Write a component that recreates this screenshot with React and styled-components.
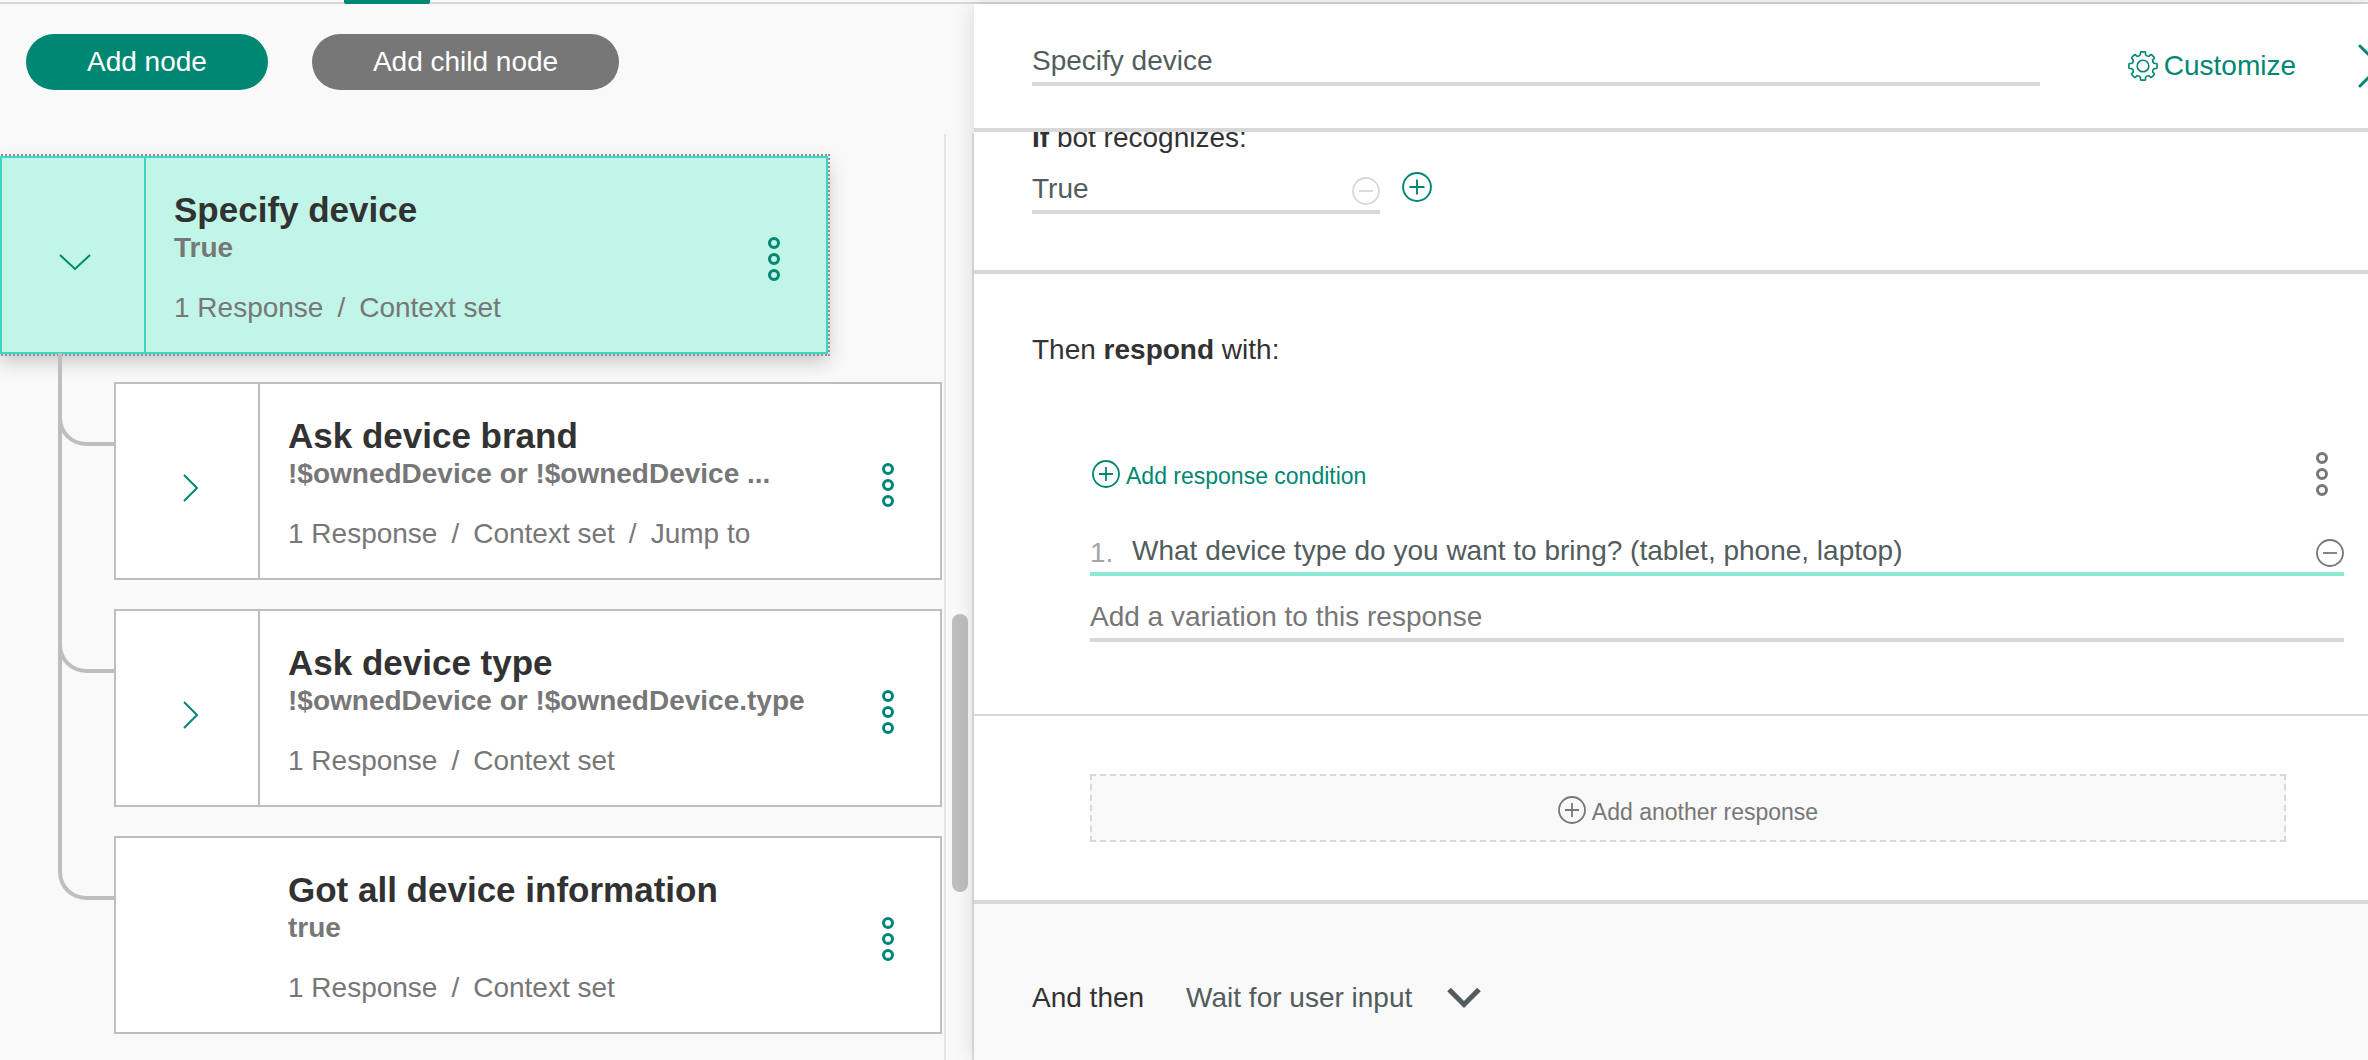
import React from "react";
import styled, { createGlobalStyle, css } from "styled-components";

const color = {
  green: "#008773",
  teal: "#41d6c3",
  mint: "#c0f5e8",
  mintLine: "#8ce9d4",
  panel: "#f9f9f9",
  line: "#d8d8d8",
  cardLine: "#bebebe",
  ink: "#323232",
  field: "#525c5c",
  grey: "#777777",
};

const GlobalStyle = createGlobalStyle`
  *, *::before, *::after { box-sizing: border-box; }
  body {
    margin: 0;
    background: ${color.panel};
    color: ${color.ink};
    font-family: "Liberation Sans", Arial, sans-serif;
    font-size: 28px;
    line-height: 32px;
  }
  button, input, select { font: inherit; color: inherit; }
`;

const Page = styled.div`
  display: flex;
  flex-direction: column;
  min-height: 100vh;
  overflow: hidden;
`;

const TabBar = styled.nav`
  display: flex;
  height: 4px;
  padding-left: 344px;
  border-bottom: 2px solid ${color.line};
`;

const ActiveTab = styled.span`
  width: 86px;
  height: 4px;
  background: ${color.green};
  border-radius: 0 0 2px 2px;
`;

const Workspace = styled.div`
  display: flex;
  flex: 1;
`;

const TreePanel = styled.section`
  display: flex;
  flex-direction: column;
  flex: none;
  width: 974px;
`;

const Toolbar = styled.div`
  display: flex;
  gap: 44px;
  padding: 30px 26px 44px;
`;

const PillButton = styled.button`
  height: 56px;
  padding: 0 61px;
  border: 0;
  border-radius: 28px;
  background: ${(p) => (p.$muted ? color.grey : color.green)};
  color: #fff;
`;

const TreeScroller = styled.div`
  display: flex;
  flex: 1;
`;

const Tree = styled.div`
  flex: 1;
  padding: 22px 2px 26px 0;
`;

const Track = styled.div`
  display: grid;
  grid-template-rows: 480fr 278fr 168fr;
  width: 30px;
  border-left: 2px solid #e6e6e6;
  border-right: 2px solid #e0e0e0;
`;

const Thumb = styled.div`
  grid-row: 2;
  width: 16px;
  margin-left: 6px;
  border-radius: 8px;
  background: ${color.cardLine};
`;

const Card = styled.article`
  display: flex;
  flex: 1;
  height: 198px;
  border: 2px solid ${color.cardLine};
  background: #fff;
  ${(p) =>
    p.$selected &&
    css`
      margin-right: 114px;
      border-color: ${color.teal};
      background: ${color.mint};
      outline: 2px dotted #8f8f8f;
      box-shadow: 0 8px 18px rgba(0, 0, 0, 0.2);
    `}
`;

const Toggle = styled.button`
  display: flex;
  align-items: center;
  justify-content: center;
  width: 144px;
  padding: 14px 0 0 ${(p) => (p.$selected ? 4 : 8)}px;
  border: 0;
  border-right: 2px solid ${(p) => (p.$selected ? color.teal : color.cardLine)};
  background: none;
`;

const NoToggle = styled.div`
  width: 144px;
`;

const CardText = styled.div`
  flex: 1;
  padding: 32px 0 0 28px;
`;

const CardTitle = styled.h3`
  margin: 0;
  font-size: 35px;
  line-height: 40px;
`;

const Condition = styled.p`
  margin: 0;
  color: ${color.grey};
  font-weight: bold;
  line-height: 36px;
`;

const Meta = styled.ul`
  display: flex;
  margin: 24px 0 0;
  padding: 0;
  list-style: none;
  color: ${color.grey};
  line-height: 36px;
  li + li::before {
    content: "/";
    margin: 0 14px;
  }
`;

const MenuButton = styled.button`
  display: flex;
  align-items: center;
  padding: ${(p) => (p.$inCard ? "8px 46px 0 16px" : "0 16px")};
  border: 0;
  background: none;
  color: ${(p) => (p.$inCard ? color.green : color.grey)};
`;

const Children = styled.ul`
  position: relative;
  margin: -1px 0 0;
  padding: 0 0 0 58px;
  list-style: none;
`;

const ChildRow = styled.li`
  display: flex;
`;

const Rail = styled.div`
  width: 56px;
  border-left: 4px solid ${(p) => (p.$last ? "transparent" : color.cardLine)};
`;

const Elbow = styled.div`
  height: 93px;
  margin-left: -4px;
  border: solid ${color.cardLine};
  border-width: 0 0 4px 4px;
  border-bottom-left-radius: 28px;
`;

const CardSlot = styled.div`
  display: flex;
  flex: 1;
  padding-top: 29px;
`;

const Detail = styled.section`
  position: relative;
  display: flex;
  flex-direction: column;
  flex: 1;
  min-width: 0;
  background: #fff;
  box-shadow: 0 0 20px rgba(0, 0, 0, 0.14);
`;

const DetailHeader = styled.header`
  display: flex;
  padding: 40px 0 40px 58px;
  border-bottom: 4px solid ${color.line};
`;

const Field = styled.div`
  display: flex;
  align-items: center;
  flex: ${(p) => (p.$short ? "none" : 1)};
  width: ${(p) => (p.$short ? "348px" : "auto")};
  min-width: 0;
  height: 42px;
  border-bottom: 4px solid ${(p) => (p.$active ? color.mintLine : color.line)};
`;

const TextInput = styled.input`
  flex: 1;
  min-width: 0;
  height: 38px;
  padding: 0 0 4px;
  border: 0;
  outline: 0;
  background: none;
  color: ${color.field};
  &::placeholder {
    color: ${color.grey};
    opacity: 1;
  }
`;

const IconButton = styled.button`
  display: flex;
  flex: none;
  padding: 0;
  border: 0;
  background: none;
  color: ${(p) => p.$color || color.green};
`;

const CustomizeButton = styled(IconButton)`
  align-items: center;
  gap: 6px;
  margin-left: 88px;
`;

const CloseButton = styled(IconButton)`
  margin: 0 -34px 0 62px;
`;

const Scrolled = styled.div`
  display: flex;
  flex-direction: column;
  flex: 1;
  overflow: hidden;
`;

const Label = styled.h2`
  margin: 0;
  font-size: 28px;
  font-weight: normal;
  line-height: 32px;
`;

const ConditionSection = styled.section`
  display: flex;
  flex-direction: column;
  gap: 18px;
  margin-top: -10px;
  padding: 0 24px 56px 58px;
  border-bottom: 4px solid ${color.line};
`;

const ConditionRow = styled.div`
  display: flex;
  align-items: flex-start;
  gap: 22px;
`;

const ResponseSection = styled.section`
  padding: 60px 24px 72px 58px;
  border-bottom: 2px solid ${color.line};
`;

const ResponseBody = styled.div`
  padding: 86px 0 0 58px;
`;

const ResponseTools = styled.div`
  display: flex;
  justify-content: space-between;
  height: 44px;
  margin-bottom: 38px;
`;

const SmallAction = styled(IconButton)`
  align-items: center;
  gap: 6px;
  padding-left: 2px;
  font-size: 23px;
  span {
    padding-top: 4px;
  }
`;

const Variations = styled.div`
  display: flex;
  flex-direction: column;
  gap: 24px;
`;

const VariationField = styled(Field)`
  flex: none;
`;

const Index = styled.span`
  width: 42px;
  color: #a6a6a6;
`;

const AnotherSection = styled.section`
  padding: 58px 82px 58px 116px;
  border-bottom: 4px solid ${color.line};
`;

const AnotherButton = styled(SmallAction)`
  justify-content: center;
  width: 100%;
  height: 68px;
  padding: 4px 0 0;
  border: 2px dashed ${color.line};
  background: ${color.panel};
`;

const ThenSection = styled.footer`
  display: flex;
  align-items: flex-start;
  flex: 1;
  gap: 42px;
  padding: 78px 24px 46px 58px;
  background: ${color.panel};
`;

const SelectWrap = styled.div`
  display: flex;
  align-items: center;
  gap: 34px;
  color: ${color.field};
`;

const Select = styled.select`
  appearance: none;
  height: 32px;
  padding: 0;
  border: 0;
  outline: 0;
  background: none;
`;

const ArrowDown = () => (
  <svg width="32" height="18" viewBox="0 0 32 18" fill="none" stroke={color.green} strokeWidth="2">
    <path d="M1 2l15 14L31 2" />
  </svg>
);

const ArrowRight = () => (
  <svg width="16" height="28" viewBox="0 0 16 28" fill="none" stroke={color.green} strokeWidth="2">
    <path d="M1 1l13 13L1 27" />
  </svg>
);

const Dots = () => (
  <svg width="12" height="44" viewBox="0 0 12 44" fill="none" stroke="currentColor" strokeWidth="3">
    <circle cx="6" cy="6" r="4.5" />
    <circle cx="6" cy="22" r="4.5" />
    <circle cx="6" cy="38" r="4.5" />
  </svg>
);

const CircleSign = ({ plus, size = 28 }) => (
  <svg width={size} height={size} viewBox="0 0 28 28" fill="none" stroke="currentColor" strokeWidth="1.8">
    <circle cx="14" cy="14" r="13" />
    <path d={plus ? "M7 14h14M14 7v14" : "M7 14h14"} />
  </svg>
);

const polar = (radius, degrees) => {
  const a = (degrees * Math.PI) / 180;
  return `${(15 + radius * Math.sin(a)).toFixed(2)} ${(15 - radius * Math.cos(a)).toFixed(2)}`;
};

const gearPath =
  Array.from({ length: 8 }, (_, i) => {
    const t = i * 45;
    const start = i === 0 ? "M" : "L";
    return (
      `${start}${polar(13, t - 11)}Q${polar(14.3, t - 11)} ${polar(14.2, t - 7)}` +
      `L${polar(14.2, t + 7)}Q${polar(14.3, t + 11)} ${polar(13, t + 11)}` +
      `L${polar(11.6, t + 13)}Q${polar(10, t + 22.5)} ${polar(11.6, t + 32)}`
    );
  }).join("") + "Z";

const Gear = () => (
  <svg width="30" height="30" viewBox="0 0 30 30" fill="none" stroke="currentColor" strokeWidth="1.6" strokeLinejoin="round">
    <path d={gearPath} />
    <circle cx="15" cy="15" r="5.8" />
  </svg>
);

const CloseIcon = () => (
  <svg width="44" height="44" viewBox="0 0 44 44" fill="none" stroke="currentColor" strokeWidth="3" strokeLinecap="round">
    <path d="M2 2l40 40M42 2L2 42" />
  </svg>
);

const Chevron = () => (
  <svg width="34" height="22" viewBox="0 0 34 22" fill="none" stroke="currentColor" strokeWidth="5">
    <path d="M2 2.500l15 15 15-15" />
  </svg>
);

function NodeCard({ title, condition, meta, selected, leaf }) {
  return (
    <Card $selected={selected}>
      {leaf ? (
        <NoToggle />
      ) : (
        <Toggle $selected={selected} aria-label={selected ? "Collapse" : "Expand"}>
          {selected ? <ArrowDown /> : <ArrowRight />}
        </Toggle>
      )}
      <CardText>
        <CardTitle>{title}</CardTitle>
        <Condition>{condition}</Condition>
        <Meta>
          {meta.map((m) => (
            <li key={m}>{m}</li>
          ))}
        </Meta>
      </CardText>
      <MenuButton $inCard aria-label="Node menu">
        <Dots />
      </MenuButton>
    </Card>
  );
}

const childNodes = [
  {
    title: "Ask device brand",
    condition: "!$ownedDevice or !$ownedDevice ...",
    meta: ["1 Response", "Context set", "Jump to"],
  },
  {
    title: "Ask device type",
    condition: "!$ownedDevice or !$ownedDevice.type",
    meta: ["1 Response", "Context set"],
  },
  {
    title: "Got all device information",
    condition: "true",
    meta: ["1 Response", "Context set"],
    leaf: true,
  },
];

export default function App() {
  return (
    <Page>
      <GlobalStyle />
      <TabBar>
        <ActiveTab />
      </TabBar>
      <Workspace>
        <TreePanel>
          <Toolbar>
            <PillButton>Add node</PillButton>
            <PillButton $muted>Add child node</PillButton>
          </Toolbar>
          <TreeScroller>
            <Tree>
              <NodeCard selected title="Specify device" condition="True" meta={["1 Response", "Context set"]} />
              <Children>
                {childNodes.map((node, i) => (
                  <ChildRow key={node.title}>
                    <Rail $last={i === childNodes.length - 1}>
                      <Elbow />
                    </Rail>
                    <CardSlot>
                      <NodeCard {...node} />
                    </CardSlot>
                  </ChildRow>
                ))}
              </Children>
            </Tree>
            <Track>
              <Thumb />
            </Track>
          </TreeScroller>
        </TreePanel>

        <Detail>
          <DetailHeader>
            <Field>
              <TextInput aria-label="Node name" defaultValue="Specify device" />
            </Field>
            <CustomizeButton>
              <Gear />
              Customize
            </CustomizeButton>
            <CloseButton aria-label="Close">
              <CloseIcon />
            </CloseButton>
          </DetailHeader>

          <Scrolled>
            <ConditionSection>
              <Label>
                <b>If</b> bot recognizes:
              </Label>
              <ConditionRow>
                <Field $short>
                  <TextInput aria-label="Condition" defaultValue="True" />
                  <IconButton $color={color.line} aria-label="Remove condition">
                    <CircleSign />
                  </IconButton>
                </Field>
                <IconButton aria-label="Add condition">
                  <CircleSign plus size={30} />
                </IconButton>
              </ConditionRow>
            </ConditionSection>

            <ResponseSection>
              <Label>
                Then <b>respond</b> with:
              </Label>
              <ResponseBody>
                <ResponseTools>
                  <SmallAction>
                    <CircleSign plus />
                    <span>Add response condition</span>
                  </SmallAction>
                  <MenuButton aria-label="Response menu">
                    <Dots />
                  </MenuButton>
                </ResponseTools>
                <Variations>
                  <VariationField $active>
                    <Index>1.</Index>
                    <TextInput
                      aria-label="Response variation 1"
                      defaultValue="What device type do you want to bring? (tablet, phone, laptop)"
                    />
                    <IconButton $color={color.grey} aria-label="Remove variation">
                      <CircleSign />
                    </IconButton>
                  </VariationField>
                  <VariationField>
                    <TextInput aria-label="New variation" placeholder="Add a variation to this response" />
                  </VariationField>
                </Variations>
              </ResponseBody>
            </ResponseSection>

            <AnotherSection>
              <AnotherButton $color={color.grey}>
                <CircleSign plus />
                <span>Add another response</span>
              </AnotherButton>
            </AnotherSection>

            <ThenSection>
              <label htmlFor="next-step">And then</label>
              <SelectWrap>
                <Select id="next-step">
                  <option>Wait for user input</option>
                </Select>
                <Chevron />
              </SelectWrap>
            </ThenSection>
          </Scrolled>
        </Detail>
      </Workspace>
    </Page>
  );
}
